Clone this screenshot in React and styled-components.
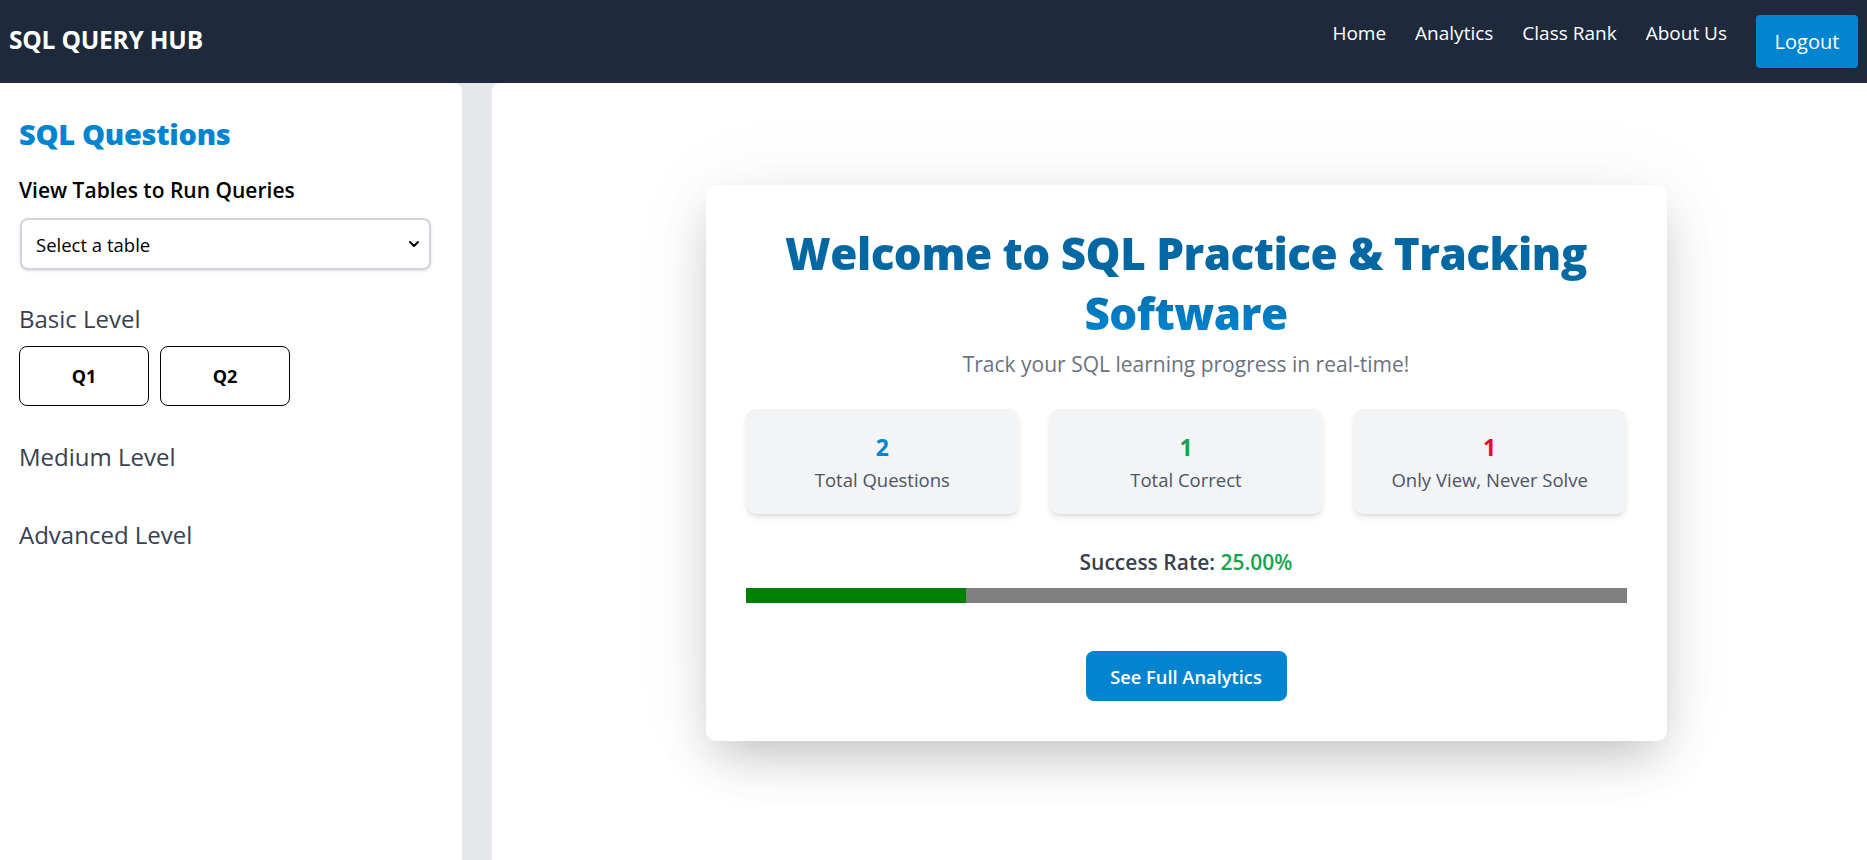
import React, { useState } from 'react';
import styled, { createGlobalStyle } from 'styled-components';
import { ChevronDown } from 'lucide-react';

const GlobalStyle = createGlobalStyle`
  * {
    box-sizing: border-box;
  }

  body {
    margin: 0;
    font-family: "Open Sans", "Noto Sans", sans-serif;
    color: #111827;
    background-color: #ffffff;
  }
`;

const Page = styled.div`
  display: flex;
  flex-direction: column;
  height: 100vh;
  overflow: hidden;
`;

const Header = styled.header`
  display: flex;
  align-items: center;
  justify-content: space-between;
  height: 83px;
  padding: 0 9px 0 9px;
  background-color: #1e293b;
  flex-shrink: 0;
`;

const Logo = styled.div`
  color: #ffffff;
  font-size: 24.5px;
  font-weight: 700;
  letter-spacing: -0.2px;
  margin-bottom: 4px;
`;

const Nav = styled.nav`
  display: flex;
  align-items: center;
  gap: 29px;
`;

const NavLink = styled.a`
  color: #ffffff;
  font-size: 19px;
  text-decoration: none;
  margin-bottom: 17px;
  cursor: pointer;
`;

const LogoutButton = styled.button`
  height: 53px;
  width: 102px;
  border: none;
  border-radius: 4px;
  background-color: #0284d0;
  color: #ffffff;
  font-family: inherit;
  font-size: 20px;
  cursor: pointer;
`;

const Body = styled.div`
  display: flex;
  flex: 1;
  gap: 30px;
  background-color: #e5e7eb;
  min-height: 0;
`;

const Sidebar = styled.aside`
  display: flex;
  flex-direction: column;
  align-items: flex-start;
  width: 462px;
  flex-shrink: 0;
  background-color: #ffffff;
  border-top-right-radius: 8px;
  padding: 33px 20px 20px 19px;
`;

const SidebarTitle = styled.h2`
  margin: 0;
  font-size: 29px;
  font-weight: 800;
  line-height: 36px;
  color: #0284d0;
  letter-spacing: -0.3px;
`;

const SidebarLabel = styled.h3`
  margin: 24px 0 0;
  font-size: 21px;
  font-weight: 600;
  line-height: 28px;
  color: #000000;
`;

const SelectWrap = styled.div`
  position: relative;
  width: 411px;
  margin: 14px 0 0 1px;
`;

const TableSelect = styled.select`
  appearance: none;
  width: 100%;
  height: 52px;
  padding: 0 40px 0 14px;
  border: 2px solid #d1d5db;
  border-radius: 8px;
  background-color: #ffffff;
  box-shadow: 0 1px 3px rgba(0, 0, 0, 0.12);
  font-family: inherit;
  font-size: 18.5px;
  color: #000000;
`;

const SelectIcon = styled.span`
  position: absolute;
  right: 9px;
  top: 50%;
  transform: translateY(-50%);
  display: flex;
  pointer-events: none;
  color: #000000;
`;

const LevelSection = styled.section`
  display: flex;
  flex-direction: column;
  margin-top: ${props => props.first ? '33px' : '35px'};
`;

const LevelTitle = styled.h4`
  margin: 0 0 11px;
  font-size: 24px;
  font-weight: 500;
  line-height: 32px;
  color: #374151;
`;

const QuestionRow = styled.div`
  display: flex;
  gap: 11px;
`;

const QuestionButton = styled.button`
  width: 130px;
  height: 60px;
  border: 1px solid #000000;
  border-radius: 8px;
  background-color: #ffffff;
  font-family: inherit;
  font-size: 18px;
  font-weight: 700;
  color: #000000;
  cursor: pointer;
`;

const Main = styled.main`
  flex: 1;
  display: flex;
  justify-content: center;
  align-items: flex-start;
  padding: 102px 0 0 13px;
  background-color: #ffffff;
  border-top-left-radius: 8px;
`;

const Card = styled.div`
  width: 961px;
  padding: 38px 40px 40px;
  border-radius: 10px;
  background-color: #ffffff;
  box-shadow: 0 22px 50px -8px rgba(0, 0, 0, 0.22), 0 0 90px rgba(0, 0, 0, 0.05);
  text-align: center;
`;

const Title = styled.h1`
  margin: 0;
  font-size: 44px;
  font-weight: 800;
  line-height: 60px;
  letter-spacing: -0.5px;
  background: linear-gradient(to bottom, #0366a6 0%, #0369a1 45%, #0288d8 100%);
  -webkit-background-clip: text;
  background-clip: text;
  color: transparent;
`;

const Subtitle = styled.p`
  margin: 7px 0 0;
  font-size: 21px;
  line-height: 28px;
  color: #6b7280;
`;

const StatGrid = styled.div`
  display: grid;
  grid-template-columns: repeat(3, 1fr);
  gap: 30px;
  margin-top: 31px;
`;

const StatBox = styled.div`
  padding: 22px 12px;
  border-radius: 10px;
  background-color: #f3f4f6;
  box-shadow: 0 4px 6px -1px rgba(0, 0, 0, 0.1), 0 2px 4px -2px rgba(0, 0, 0, 0.1);
`;

const StatValue = styled.div`
  font-size: 23px;
  font-weight: 700;
  line-height: 32px;
  color: ${props => props.color};
`;

const StatLabel = styled.div`
  margin-top: 5px;
  font-size: 18.5px;
  line-height: 24px;
  color: #4b5563;
`;

const RateText = styled.p`
  margin: 34px 0 0;
  font-size: 21px;
  font-weight: 600;
  line-height: 28px;
  color: #374151;
`;

const RateValue = styled.span`
  color: #16a34a;
`;

const ProgressTrack = styled.div`
  display: flex;
  height: 15px;
  margin-top: 12px;
  background-color: #808080;
`;

const ProgressFill = styled.div`
  height: 100%;
  background-color: #008000;
`;

const AnalyticsButton = styled.button`
  height: 50px;
  width: 201px;
  margin-top: 48px;
  border: none;
  border-radius: 8px;
  background-color: #0284d0;
  color: #ffffff;
  font-family: inherit;
  font-size: 18.3px;
  font-weight: 600;
  cursor: pointer;
`;

const stats = [
  { value: 2, label: 'Total Questions', color: '#0284d0' },
  { value: 1, label: 'Total Correct', color: '#16a34a' },
  { value: 1, label: 'Only View, Never Solve', color: '#e3101f' },
];

const levels = [
  { name: 'Basic Level', questions: ['Q1', 'Q2'] },
  { name: 'Medium Level', questions: [] },
  { name: 'Advanced Level', questions: [] },
];

const App = () => {
  const [table, setTable] = useState('');
  const successRate = 25;

  return (
    <Page>
      <GlobalStyle />
      <Header>
        <Logo>SQL QUERY HUB</Logo>
        <Nav>
          <NavLink>Home</NavLink>
          <NavLink>Analytics</NavLink>
          <NavLink>Class Rank</NavLink>
          <NavLink>About Us</NavLink>
          <LogoutButton>Logout</LogoutButton>
        </Nav>
      </Header>
      <Body>
        <Sidebar>
          <SidebarTitle>SQL Questions</SidebarTitle>
          <SidebarLabel>View Tables to Run Queries</SidebarLabel>
          <SelectWrap>
            <TableSelect value={table} onChange={(e) => setTable(e.target.value)}>
              <option value="">Select a table</option>
              <option value="students">students</option>
              <option value="courses">courses</option>
            </TableSelect>
            <SelectIcon>
              <ChevronDown size={16} strokeWidth={3} />
            </SelectIcon>
          </SelectWrap>
          {levels.map((level, i) => (
            <LevelSection key={level.name} first={i === 0}>
              <LevelTitle>{level.name}</LevelTitle>
              <QuestionRow>
                {level.questions.map(q => (
                  <QuestionButton key={q}>{q}</QuestionButton>
                ))}
              </QuestionRow>
            </LevelSection>
          ))}
        </Sidebar>
        <Main>
          <Card>
            <Title>Welcome to SQL Practice &amp; Tracking Software</Title>
            <Subtitle>Track your SQL learning progress in real-time!</Subtitle>
            <StatGrid>
              {stats.map(s => (
                <StatBox key={s.label}>
                  <StatValue color={s.color}>{s.value}</StatValue>
                  <StatLabel>{s.label}</StatLabel>
                </StatBox>
              ))}
            </StatGrid>
            <RateText>
              Success Rate: <RateValue>{successRate.toFixed(2)}%</RateValue>
            </RateText>
            <ProgressTrack>
              <ProgressFill style={{ width: `${successRate}%` }} />
            </ProgressTrack>
            <AnalyticsButton>See Full Analytics</AnalyticsButton>
          </Card>
        </Main>
      </Body>
    </Page>
  );
};

export default App;
